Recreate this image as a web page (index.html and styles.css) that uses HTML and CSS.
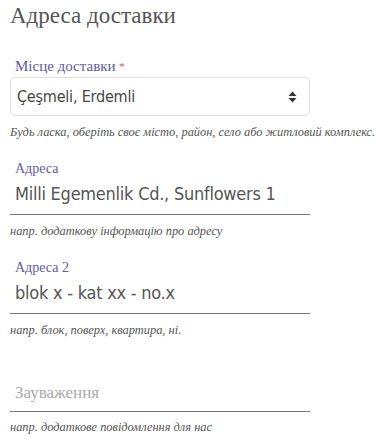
FILE: index.html
```html
<!DOCTYPE html>
<html lang="uk">
<head>
<meta charset="utf-8">
<link rel="stylesheet" href="styles.css">
</head>
<body>
<div class="page">
  <h2 class="title">Адреса доставки</h2>

  <div class="field field-select">
    <label class="label">Місце доставки <span class="req">*</span></label>
    <div class="select">
      <span class="select-value">Çeşmeli, Erdemli</span>
      <svg class="select-arrow" width="9" height="12" viewBox="0 0 9 12"><path d="M4.5 0.5 L8.5 5 L0.5 5 Z" fill="#333"/><path d="M4.5 11.5 L8.5 7 L0.5 7 Z" fill="#333"/></svg>
    </div>
    <div class="help">Будь ласка, оберіть своє місто, район, село або житловий комплекс.</div>
  </div>

  <div class="field field-a">
    <label class="label small">Адреса</label>
    <div class="input">Milli Egemenlik Cd., Sunflowers 1</div>
    <div class="help">напр. додаткову інформацію про адресу</div>
  </div>

  <div class="field field-b">
    <label class="label small">Адреса 2</label>
    <div class="input">blok x - kat xx - no.x</div>
    <div class="help">напр. блок, поверх, квартира, ні.</div>
  </div>

  <div class="field field-c">
    <div class="input placeholder">Зауваження</div>
    <div class="help">напр. додаткове повідомлення для нас</div>
  </div>
</div>
</body>
</html>
```
FILE: styles.css
```css
html, body {
  margin: 0;
  padding: 0;
  background: #fff;
}
.page {
  width: 300px;
  padding: 0 10px;
  font-family: "Liberation Serif", "DejaVu Serif", serif;
  color: #555;
}
.title {
  margin: 0;
  padding-top: 3px;
  font-weight: normal;
  font-size: 23px;
  line-height: 26px;
  color: #555;
}
.field-select {
  margin-top: 28px;
}
.label {
  display: block;
  padding-left: 5px;
  font-size: 15px;
  line-height: 18px;
  color: #6258a8;
}
.label.small {
  font-size: 14px;
  line-height: 16px;
}
.req {
  color: #d9534f;
  font-size: 11px;
  vertical-align: top;
}
.select {
  margin-top: 2px;
  height: 37px;
  border: 1px solid #ddd;
  border-radius: 5px;
  display: flex;
  align-items: center;
  justify-content: space-between;
  padding: 0 12px 0 6px;
}
.select-value {
  font-family: "DejaVu Sans Condensed", "DejaVu Sans", sans-serif;
  font-size: 16px;
  letter-spacing: -0.2px;
  color: #444;
}
.help {
  font-style: italic;
  font-size: 12.4px;
  line-height: 14px;
  color: #555;
  margin-top: 9px;
  white-space: nowrap;
}
.field-a {
  margin-top: 22px;
}
.input {
  padding-left: 5px;
  height: 38px;
  line-height: 34px;
  font-family: "DejaVu Sans Condensed", "DejaVu Sans", sans-serif;
  font-size: 18px;
  letter-spacing: -0.25px;
  color: #555;
  border-bottom: 1px solid #777;
  box-sizing: border-box;
  white-space: nowrap;
}
.field-b {
  margin-top: 22px;
}
.field-c {
  margin-top: 37px;
}
.placeholder {
  font-family: "Liberation Serif", "DejaVu Serif", serif;
  font-size: 17px;
  line-height: 38px;
  letter-spacing: 0;
  color: #aaa;
}
.field-c .help {
  margin-top: 8px;
}
```
